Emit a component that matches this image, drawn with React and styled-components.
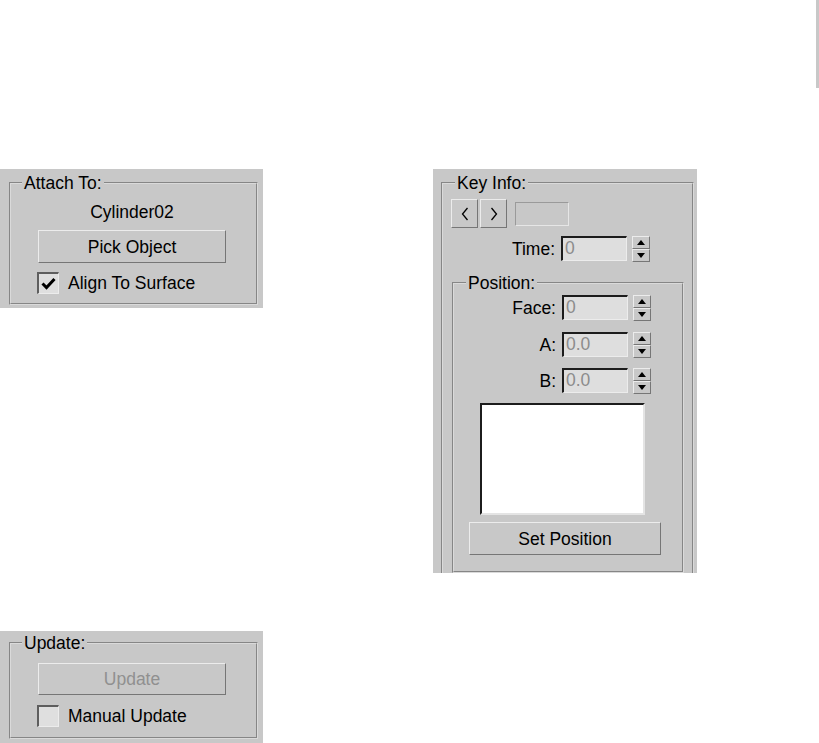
import React from 'react';
import styled, { createGlobalStyle } from 'styled-components';

const PANEL = '#c8c8c8';

const Global = createGlobalStyle`
  html, body { margin: 0; padding: 0; background: #ffffff; }
  body {
    font-family: "Liberation Sans", Arial, sans-serif;
    font-size: 17.5px;
    line-height: 20px;
    color: #000;
  }
  * { box-sizing: border-box; }
`;

const Page = styled.div`
  width: 819px;
  height: 743px;
  display: flex;
  flex-direction: column;
  overflow: hidden;
`;

const TopBar = styled.div`
  height: 169px;
  display: flex;
  justify-content: flex-end;
  align-items: flex-start;
`;

const EdgeStrip = styled.div`
  width: 3px;
  height: 88px;
  background: ${PANEL};
`;

const Main = styled.div`
  flex: 1;
  display: flex;
  align-items: flex-start;
`;

const LeftColumn = styled.div`
  width: 263px;
  height: 574px;
  display: flex;
  flex-direction: column;
  justify-content: space-between;
`;

const Panel = styled.div`
  background: ${PANEL};
  width: ${(p) => p.$w}px;
  height: ${(p) => p.$h}px;
  margin-left: ${(p) => p.$ml || 0}px;
  overflow: hidden;
  display: flex;
  flex-direction: column;
  align-items: flex-start;
`;

const Group = styled.fieldset`
  margin: ${(p) => p.$mt}px 0 0 ${(p) => p.$ml}px;
  width: ${(p) => p.$w}px;
  padding: 0 0 ${(p) => p.$pb}px 0;
  border: 2px groove #dadada;
  min-inline-size: 0;
  display: flex;
  flex-direction: column;
  align-items: flex-start;
  flex-shrink: 0;
`;

const Legend = styled.legend`
  margin-left: ${(p) => p.$ml}px;
  padding: 0 2px;
  height: 20px;
  line-height: 20px;
  background: ${PANEL};
  white-space: nowrap;
`;

const CenterText = styled.div`
  margin: ${(p) => p.$mt}px 0 0 ${(p) => p.$ml}px;
  width: ${(p) => p.$w}px;
  text-align: center;
  height: 20px;
`;

const Button = styled.div`
  margin: ${(p) => p.$mt}px 0 0 ${(p) => p.$ml}px;
  width: ${(p) => p.$w}px;
  height: ${(p) => p.$h}px;
  display: flex;
  align-items: center;
  justify-content: center;
  background: ${PANEL};
  border: 1px solid;
  border-color: #ececec #767676 #767676 #ececec;
  color: ${(p) => (p.$disabled ? '#909090' : '#000')};
  white-space: nowrap;
  flex-shrink: 0;
`;

const CheckRow = styled.div`
  margin: ${(p) => p.$mt}px 0 0 ${(p) => p.$ml}px;
  height: 22px;
  display: flex;
  align-items: center;
  white-space: nowrap;
`;

const CheckBox = styled.div`
  width: 22px;
  height: 22px;
  border-style: solid;
  border-width: 2px 1px 1px 2px;
  border-color: #5e5e5e #ececec #ececec #5e5e5e;
  background: #dfdfdf;
  display: flex;
  align-items: center;
  justify-content: center;
  margin-right: 9px;
`;

const NavRow = styled.div`
  margin: 6px 0 0 8px;
  height: 29px;
  display: flex;
  align-items: center;
`;

const NavButton = styled.div`
  width: 27px;
  height: 29px;
  margin-right: 2px;
  display: flex;
  align-items: center;
  justify-content: center;
  background: ${PANEL};
  border: 1px solid;
  border-color: #ececec #767676 #767676 #ececec;
`;

const KeyField = styled.div`
  margin-left: 6px;
  width: 54px;
  height: 24px;
  border: 1px solid;
  border-color: #9a9a9a #e6e6e6 #e6e6e6 #9a9a9a;
  background: ${PANEL};
`;

const FieldRow = styled.div`
  margin: ${(p) => p.$mt}px 0 0 0;
  height: 26px;
  display: flex;
  align-items: center;
`;

const FieldLabel = styled.div`
  width: ${(p) => p.$w}px;
  margin-right: 6px;
  text-align: right;
  white-space: nowrap;
`;

const TextField = styled.div`
  width: 66px;
  height: 25px;
  border-style: solid;
  border-width: 2px 1px 1px 2px;
  border-color: #1c1c1c #ececec #ececec #1c1c1c;
  background: #dedede;
  color: #8c8c8c;
  padding-left: 2px;
  line-height: 21px;
  align-self: flex-start;
`;

const Spinner = styled.div`
  margin-left: 5px;
  width: 18px;
  height: 26px;
  display: flex;
  flex-direction: column;
`;

const SpinHalf = styled.div`
  flex: 1;
  display: flex;
  align-items: center;
  justify-content: center;
  background: ${PANEL};
  border: 1px solid;
  border-color: #ececec #767676 #767676 #ececec;
`;

const Triangle = styled.div`
  width: 0;
  height: 0;
  border-left: 4px solid transparent;
  border-right: 4px solid transparent;
  ${(p) =>
    p.$up
      ? 'border-bottom: 5px solid #000;'
      : 'border-top: 5px solid #000;'}
`;

const ListBox = styled.div`
  margin: 9px 0 0 26px;
  width: 165px;
  height: 112px;
  background: #ffffff;
  border-style: solid;
  border-width: 2px 2px 2px 2px;
  border-color: #1c1c1c #e4e4e4 #e4e4e4 #1c1c1c;
`;

const Check = () => (
  <svg width="15" height="13" viewBox="0 0 15 13">
    <polyline
      points="1.5,6.5 5.5,10.5 13.5,2"
      fill="none"
      stroke="#000"
      strokeWidth="3"
    />
  </svg>
);

const Chevron = ({ dir }) => (
  <svg width="8" height="14" viewBox="0 0 8 14">
    <polyline
      points={dir === 'left' ? '6.5,1 1.5,7 6.5,13' : '1.5,1 6.5,7 1.5,13'}
      fill="none"
      stroke="#000"
      strokeWidth="1.3"
    />
  </svg>
);

const Spin = () => (
  <Spinner>
    <SpinHalf>
      <Triangle $up />
    </SpinHalf>
    <SpinHalf>
      <Triangle />
    </SpinHalf>
  </Spinner>
);

const Field = ({ label, value, labelWidth, mt }) => (
  <FieldRow $mt={mt}>
    <FieldLabel $w={labelWidth}>{label}</FieldLabel>
    <TextField>{value}</TextField>
    <Spin />
  </FieldRow>
);

export default function App() {
  return (
    <>
      <Global />
      <Page>
        <TopBar>
          <EdgeStrip />
        </TopBar>
        <Main>
          <LeftColumn>
            <Panel $w={263} $h={139}>
              <Group $mt={4} $ml={9} $w={249} $pb={9}>
                <Legend $ml={11}>Attach To:</Legend>
                <CenterText $mt={9} $ml={27} $w={188}>
                  Cylinder02
                </CenterText>
                <Button $mt={8} $ml={27} $w={188} $h={33}>
                  Pick Object
                </Button>
                <CheckRow $mt={9} $ml={26}>
                  <CheckBox>
                    <Check />
                  </CheckBox>
                  Align To Surface
                </CheckRow>
              </Group>
            </Panel>
            <Panel $w={263} $h={112}>
              <Group $mt={2} $ml={9} $w={249} $pb={10}>
                <Legend $ml={11}>Update:</Legend>
                <Button $mt={10} $ml={27} $w={188} $h={32} $disabled>
                  Update
                </Button>
                <CheckRow $mt={10} $ml={26}>
                  <CheckBox />
                  Manual Update
                </CheckRow>
              </Group>
            </Panel>
          </LeftColumn>
          <Panel $w={264} $h={404} $ml={170}>
            <Group $mt={4} $ml={8} $w={253} $pb={40}>
              <Legend $ml={12}>Key Info:</Legend>
              <NavRow>
                <NavButton>
                  <Chevron dir="left" />
                </NavButton>
                <NavButton>
                  <Chevron dir="right" />
                </NavButton>
                <KeyField />
              </NavRow>
              <Field label="Time:" value="0" labelWidth={112} mt={8} />
              <Group $mt={11} $ml={9} $w={232} $pb={16}>
                <Legend $ml={12}>Position:</Legend>
                <Field label="Face:" value="0" labelWidth={102} mt={2} />
                <Field label="A:" value="0.0" labelWidth={102} mt={11} />
                <Field label="B:" value="0.0" labelWidth={102} mt={10} />
                <ListBox />
                <Button $mt={7} $ml={15} $w={192} $h={33}>
                  Set Position
                </Button>
              </Group>
            </Group>
          </Panel>
        </Main>
      </Page>
    </>
  );
}
